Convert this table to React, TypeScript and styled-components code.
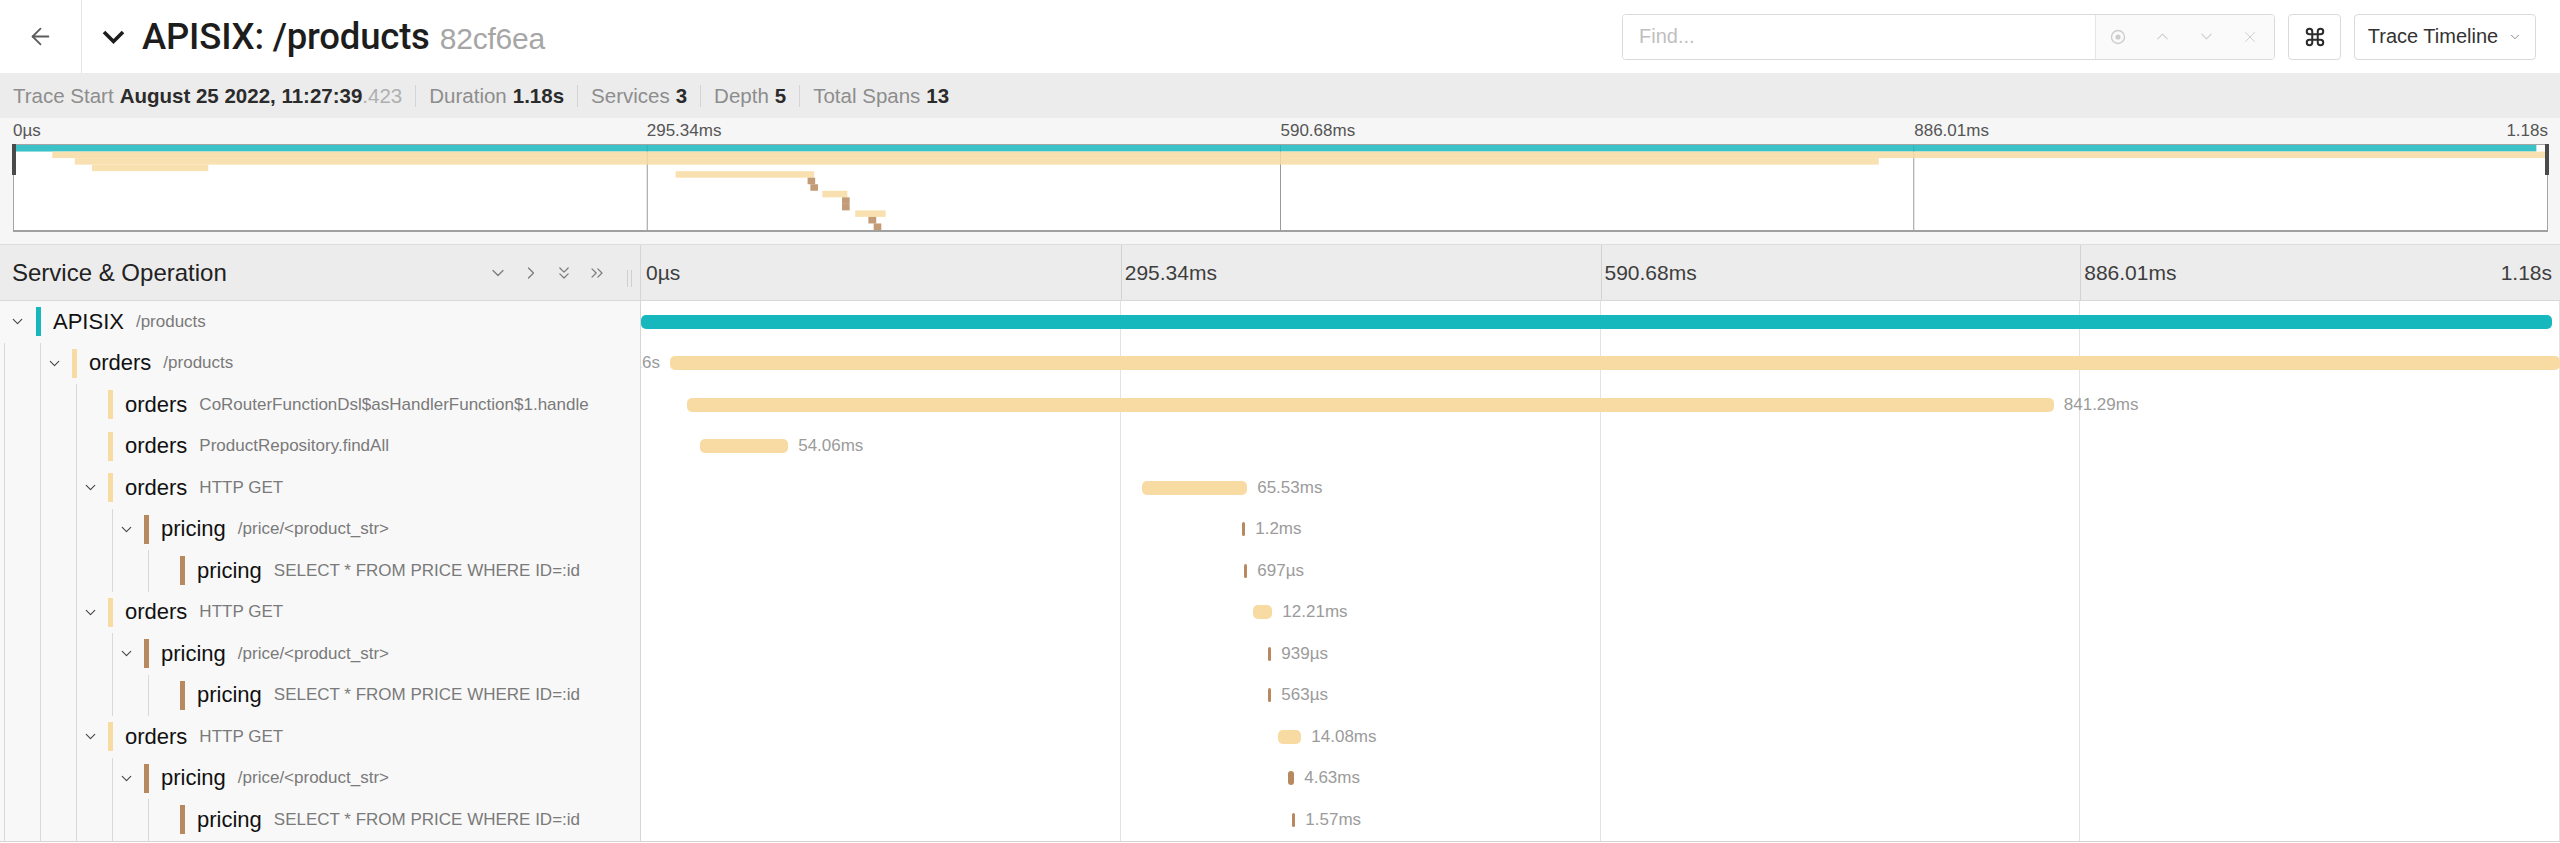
import React from 'react';
import styled, { createGlobalStyle } from 'styled-components';
import {
  ArrowLeft,
  ChevronDown,
  ChevronRight,
  ChevronsDown,
  ChevronsRight,
  ChevronUp,
  Command,
  X,
} from 'lucide-react';

const GlobalStyle = createGlobalStyle`
  html, body { margin: 0; padding: 0; background: #fff; }
  body {
    font-family: 'Helvetica Neue', Helvetica, 'Liberation Sans', Arial, sans-serif;
    color: #222;
  }
  * { box-sizing: border-box; }
`;

type Service = 'apisix' | 'orders' | 'pricing';

const COLORS: Record<Service, string> = {
  apisix: '#17b7be',
  orders: '#f8dba2',
  pricing: '#b8895f',
};

interface SpanRow {
  service: Service;
  name: string;
  op: string;
  depth: number;
  expandable: boolean;
  left: number; // % of trace duration
  width: number;
  label?: string;
  labelLeft?: boolean;
}

const spans: SpanRow[] = [
  { service: 'apisix', name: 'APISIX', op: '/products', depth: 0, expandable: true, left: 0, width: 99.58 },
  { service: 'orders', name: 'orders', op: '/products', depth: 1, expandable: true, left: 1.51, width: 98.49, label: '1.16s', labelLeft: true },
  { service: 'orders', name: 'orders', op: 'CoRouterFunctionDsl$asHandlerFunction$1.handle', depth: 2, expandable: false, left: 2.4, width: 71.22, label: '841.29ms' },
  { service: 'orders', name: 'orders', op: 'ProductRepository.findAll', depth: 2, expandable: false, left: 3.08, width: 4.59, label: '54.06ms' },
  { service: 'orders', name: 'orders', op: 'HTTP GET', depth: 2, expandable: true, left: 26.12, width: 5.47, label: '65.53ms' },
  { service: 'pricing', name: 'pricing', op: '/price/<product_str>', depth: 3, expandable: true, left: 31.33, width: 0.1, label: '1.2ms' },
  { service: 'pricing', name: 'pricing', op: 'SELECT * FROM PRICE WHERE ID=:id', depth: 4, expandable: false, left: 31.44, width: 0.06, label: '697µs' },
  { service: 'orders', name: 'orders', op: 'HTTP GET', depth: 2, expandable: true, left: 31.91, width: 0.99, label: '12.21ms' },
  { service: 'pricing', name: 'pricing', op: '/price/<product_str>', depth: 3, expandable: true, left: 32.69, width: 0.08, label: '939µs' },
  { service: 'pricing', name: 'pricing', op: 'SELECT * FROM PRICE WHERE ID=:id', depth: 4, expandable: false, left: 32.69, width: 0.05, label: '563µs' },
  { service: 'orders', name: 'orders', op: 'HTTP GET', depth: 2, expandable: true, left: 33.21, width: 1.2, label: '14.08ms' },
  { service: 'pricing', name: 'pricing', op: '/price/<product_str>', depth: 3, expandable: true, left: 33.73, width: 0.31, label: '4.63ms' },
  { service: 'pricing', name: 'pricing', op: 'SELECT * FROM PRICE WHERE ID=:id', depth: 4, expandable: false, left: 33.94, width: 0.13, label: '1.57ms' },
];

const ticks = ['0µs', '295.34ms', '590.68ms', '886.01ms'];

/* ---------- header ---------- */

const Header = styled.header`
  display: flex;
  align-items: center;
  height: 73px;
  background: #fff;
`;

const BackButton = styled.button`
  width: 82px;
  height: 100%;
  padding: 0;
  border: 0;
  border-right: 1px solid #e4e4e4;
  background: transparent;
  color: #5c5c5c;
  display: flex;
  align-items: center;
  justify-content: center;
`;

const TitleWrap = styled.div`
  flex: 1;
  display: flex;
  align-items: center;
  padding-left: 19px;
  gap: 16px;
`;

const Title = styled.h1`
  margin: 0;
  font-size: 36.5px;
  font-weight: 500;
  font-family: Roboto, 'Liberation Sans', Arial, sans-serif;
  color: #1d1d1d;
  letter-spacing: -0.2px;
  white-space: nowrap;
`;

const TraceId = styled.span`
  margin-left: 10px;
  font-family: 'Liberation Sans', Arial, sans-serif;
  font-size: 30px;
  font-weight: 400;
  color: #a6a6a6;
`;

const FindBox = styled.div`
  display: flex;
  width: 653px;
  height: 46px;
  border: 1px solid #dadada;
  border-radius: 4px;
  overflow: hidden;
`;

const FindInput = styled.input`
  width: 473px;
  height: 100%;
  border: 0;
  border-right: 1px solid #e6e6e6;
  padding: 0 0 0 16px;
  font: inherit;
  font-size: 20px;
  color: #333;
  outline: none;
  &::placeholder { color: #c0c0c0; }
`;

const FindActions = styled.div`
  flex: 1;
  display: flex;
  align-items: center;
  background: #fafafa;
`;

const FindAction = styled.span`
  width: 44px;
  display: flex;
  justify-content: center;
  color: #cdcdcd;
`;

const HeaderButton = styled.button<{ $width: number }>`
  width: ${(p) => p.$width}px;
  height: 46px;
  margin-left: 13px;
  border: 1px solid #dadada;
  border-radius: 4px;
  background: #fff;
  display: flex;
  align-items: center;
  justify-content: center;
  gap: 10px;
  padding: 0;
  font: inherit;
  font-size: 20px;
  color: #333;
  &:last-child { margin-right: 24px; }
`;

/* ---------- stats bar ---------- */

const StatsBar = styled.section`
  display: flex;
  align-items: center;
  height: 45px;
  padding-left: 13px;
  background: #ececec;
  font-size: 20.5px;
`;

const StatLabel = styled.span`
  color: #8d8d8d;
`;

const StatValue = styled.strong`
  margin-left: 6px;
  color: #2b2b2b;
  font-weight: 700;
`;

const StatFaint = styled.span`
  color: #b0b0b0;
  font-weight: 400;
`;

const StatDivider = styled.span`
  width: 1px;
  height: 22px;
  margin: 0 13px;
  background: #d4d4d4;
`;

/* ---------- minimap ---------- */

const Minimap = styled.section`
  background: #f6f6f6;
  padding: 0 12px 12px 13px;
`;

const MiniTicks = styled.div`
  display: grid;
  grid-template-columns: repeat(4, 1fr);
  align-items: center;
  height: 26px;
  font-size: 17px;
  color: #555;
`;

const MiniTick = styled.div`
  display: flex;
  justify-content: space-between;
`;

const MiniBox = styled.div`
  position: relative;
  height: 88px;
  background: #fff;
  border: 1px solid #a4a4a4;
  border-bottom: 2px solid #a0a0a0;

  svg { display: block; width: 100%; height: 100%; }
`;

const Handle = styled.span<{ $side: 'left' | 'right' }>`
  position: absolute;
  top: -1px;
  ${(p) => p.$side}: -2px;
  width: 4px;
  height: 31px;
  background: #4a4a4a;
`;

/* ---------- detail ---------- */

const Detail = styled.section`
  border-top: 1px solid #dcdcdc;
  border-bottom: 1px solid #d4d4d4;
`;

const DetailHeader = styled.div`
  display: grid;
  grid-template-columns: 641px 1fr;
  height: 56px;
  background: #ececec;
  border-bottom: 1px solid #d8d8d8;
`;

const NameHeader = styled.div`
  display: flex;
  align-items: center;
  padding: 0 8px 0 12px;
  border-right: 1px solid #d6d6d6;
  font-size: 24px;
  color: #222;
`;

const HeaderTools = styled.div`
  margin-left: auto;
  display: flex;
  align-items: center;
  gap: 13px;
  color: #7c7c7c;
`;

const Resizer = styled.span`
  align-self: flex-end;
  width: 5px;
  height: 17px;
  margin: 0 0 13px 20px;
  border-left: 1px solid #cfcfcf;
  border-right: 1px solid #cfcfcf;
`;

const TickRow = styled.div`
  display: grid;
  grid-template-columns: repeat(4, 1fr);
`;

const TickCell = styled.div`
  display: flex;
  align-items: center;
  justify-content: space-between;
  padding: 0 8px 0 5px;
  font-size: 21px;
  color: #3e3e3e;
  & + & { border-left: 1px solid #d2d2d2; padding-left: 3px; }
`;

const Row = styled.div`
  display: grid;
  grid-template-columns: 641px 1fr;
  height: 41.5px;
`;

const NameCell = styled.div`
  display: flex;
  align-items: center;
  height: 100%;
  padding-left: 4px;
  background: #f8f8f8;
  border-right: 1px solid #d6d6d6;
  white-space: nowrap;
  overflow: hidden;
`;

const Guide = styled.span`
  flex: none;
  width: 36px;
  height: 100%;
  border-left: 1px solid #d9d9d9;
`;

const Toggle = styled.span<{ $guide: boolean }>`
  flex: none;
  width: 32px;
  height: 100%;
  display: flex;
  align-items: center;
  padding-left: 5px;
  color: #444;
  border-left: ${(p) => (p.$guide ? '1px solid #d9d9d9' : '0')};
`;

const ServiceMark = styled.span<{ $color: string }>`
  flex: none;
  width: 5px;
  height: 29px;
  background: ${(p) => p.$color};
`;

const ServiceName = styled.span`
  margin-left: 12px;
  font-size: 22px;
  color: #111;
`;

const OpName = styled.span`
  margin-left: 12px;
  font-size: 17px;
  color: #7a7a7a;
`;

const TimelineCell = styled.div`
  position: relative;
  overflow: hidden;
  background-image: repeating-linear-gradient(
    to right,
    transparent 0,
    transparent calc(25% - 1px),
    #e3e3e3 calc(25% - 1px),
    #e3e3e3 25%
  );
`;

const Bar = styled.span<{ $color: string }>`
  position: absolute;
  top: 50%;
  height: 14px;
  transform: translateY(-50%);
  border-radius: 5px;
  background: ${(p) => p.$color};
`;

const BarLabel = styled.span`
  position: absolute;
  top: 50%;
  transform: translateY(-50%);
  font-size: 17px;
  color: #9b9b9b;
  white-space: nowrap;
`;

function SpanTimeline({ span }: { span: SpanRow }) {
  const width = `max(3px, ${span.width}%)`;
  const labelStyle = span.labelLeft
    ? { right: `calc(${100 - span.left}% + 10px)` }
    : { left: `calc(${span.left}% + ${width} + 10px)` };
  return (
    <TimelineCell>
      <Bar $color={COLORS[span.service]} style={{ left: `${span.left}%`, width }} />
      {span.label && <BarLabel style={labelStyle}>{span.label}</BarLabel>}
    </TimelineCell>
  );
}

function SpanName({ span }: { span: SpanRow }) {
  return (
    <NameCell>
      {Array.from({ length: span.depth }, (_, i) => (
        <Guide key={i} />
      ))}
      <Toggle $guide={span.depth > 0}>
        {span.expandable && <ChevronDown size={17} strokeWidth={1.6} />}
      </Toggle>
      <ServiceMark $color={COLORS[span.service]} />
      <ServiceName>{span.name}</ServiceName>
      <OpName>{span.op}</OpName>
    </NameCell>
  );
}

function LocateIcon() {
  return (
    <svg width="18" height="18" viewBox="0 0 18 18" fill="none" stroke="currentColor">
      <circle cx="9" cy="9" r="6.5" strokeWidth="1.4" />
      <circle cx="9" cy="9" r="2.6" fill="currentColor" stroke="none" />
    </svg>
  );
}

function MinimapGraph() {
  const n = spans.length;
  return (
    <MiniBox>
      <svg viewBox={`0 0 100 ${n}`} preserveAspectRatio="none">
        {[25, 50, 75].map((x) => (
          <line key={x} x1={x} x2={x} y1={0} y2={n} stroke="#9a9a9a" strokeWidth={1} vectorEffect="non-scaling-stroke" />
        ))}
        {spans.map((s, i) => (
          <rect
            key={i}
            x={s.left}
            y={i}
            width={Math.min(Math.max(s.width, 0.3), 100 - s.left)}
            height={1}
            fill={COLORS[s.service]}
            opacity={0.85}
          />
        ))}
      </svg>
      <Handle $side="left" />
      <Handle $side="right" />
    </MiniBox>
  );
}

export default function App() {
  return (
    <>
      <GlobalStyle />
      <Header>
        <BackButton aria-label="Back">
          <ArrowLeft size={27} strokeWidth={1.6} />
        </BackButton>
        <TitleWrap>
          <svg width="25" height="16" viewBox="0 0 25 16">
            <polyline points="3,3 12.5,12.5 22,3" fill="none" stroke="#1d1d1d" strokeWidth="3.6" />
          </svg>
          <Title>
            APISIX: /products<TraceId>82cf6ea</TraceId>
          </Title>
        </TitleWrap>
        <FindBox>
          <FindInput placeholder="Find..." />
          <FindActions>
            <FindAction><LocateIcon /></FindAction>
            <FindAction><ChevronUp size={19} strokeWidth={1.3} /></FindAction>
            <FindAction><ChevronDown size={19} strokeWidth={1.3} /></FindAction>
            <FindAction><X size={18} strokeWidth={1.3} /></FindAction>
          </FindActions>
        </FindBox>
        <HeaderButton $width={53} aria-label="Keyboard shortcuts">
          <Command size={22} strokeWidth={2.2} color="#2b2b2b" />
        </HeaderButton>
        <HeaderButton $width={182}>
          Trace Timeline
          <ChevronDown size={14} strokeWidth={1.5} color="#777" />
        </HeaderButton>
      </Header>

      <StatsBar>
        <StatLabel>Trace Start</StatLabel>
        <StatValue>
          August 25 2022, 11:27:39<StatFaint>.423</StatFaint>
        </StatValue>
        <StatDivider />
        <StatLabel>Duration</StatLabel>
        <StatValue>1.18s</StatValue>
        <StatDivider />
        <StatLabel>Services</StatLabel>
        <StatValue>3</StatValue>
        <StatDivider />
        <StatLabel>Depth</StatLabel>
        <StatValue>5</StatValue>
        <StatDivider />
        <StatLabel>Total Spans</StatLabel>
        <StatValue>13</StatValue>
      </StatsBar>

      <Minimap>
        <MiniTicks>
          {ticks.map((t, i) => (
            <MiniTick key={t}>
              <span>{t}</span>
              {i === ticks.length - 1 && <span>1.18s</span>}
            </MiniTick>
          ))}
        </MiniTicks>
        <MinimapGraph />
      </Minimap>

      <Detail>
        <DetailHeader>
          <NameHeader>
            Service &amp; Operation
            <HeaderTools>
              <ChevronDown size={20} strokeWidth={1.5} />
              <ChevronRight size={20} strokeWidth={1.5} />
              <ChevronsDown size={20} strokeWidth={1.5} />
              <ChevronsRight size={20} strokeWidth={1.5} />
            </HeaderTools>
            <Resizer />
          </NameHeader>
          <TickRow>
            {ticks.map((t, i) => (
              <TickCell key={t}>
                <span>{t}</span>
                {i === ticks.length - 1 && <span>1.18s</span>}
              </TickCell>
            ))}
          </TickRow>
        </DetailHeader>
        {spans.map((s, i) => (
          <Row key={i}>
            <SpanName span={s} />
            <SpanTimeline span={s} />
          </Row>
        ))}
      </Detail>
    </>
  );
}
